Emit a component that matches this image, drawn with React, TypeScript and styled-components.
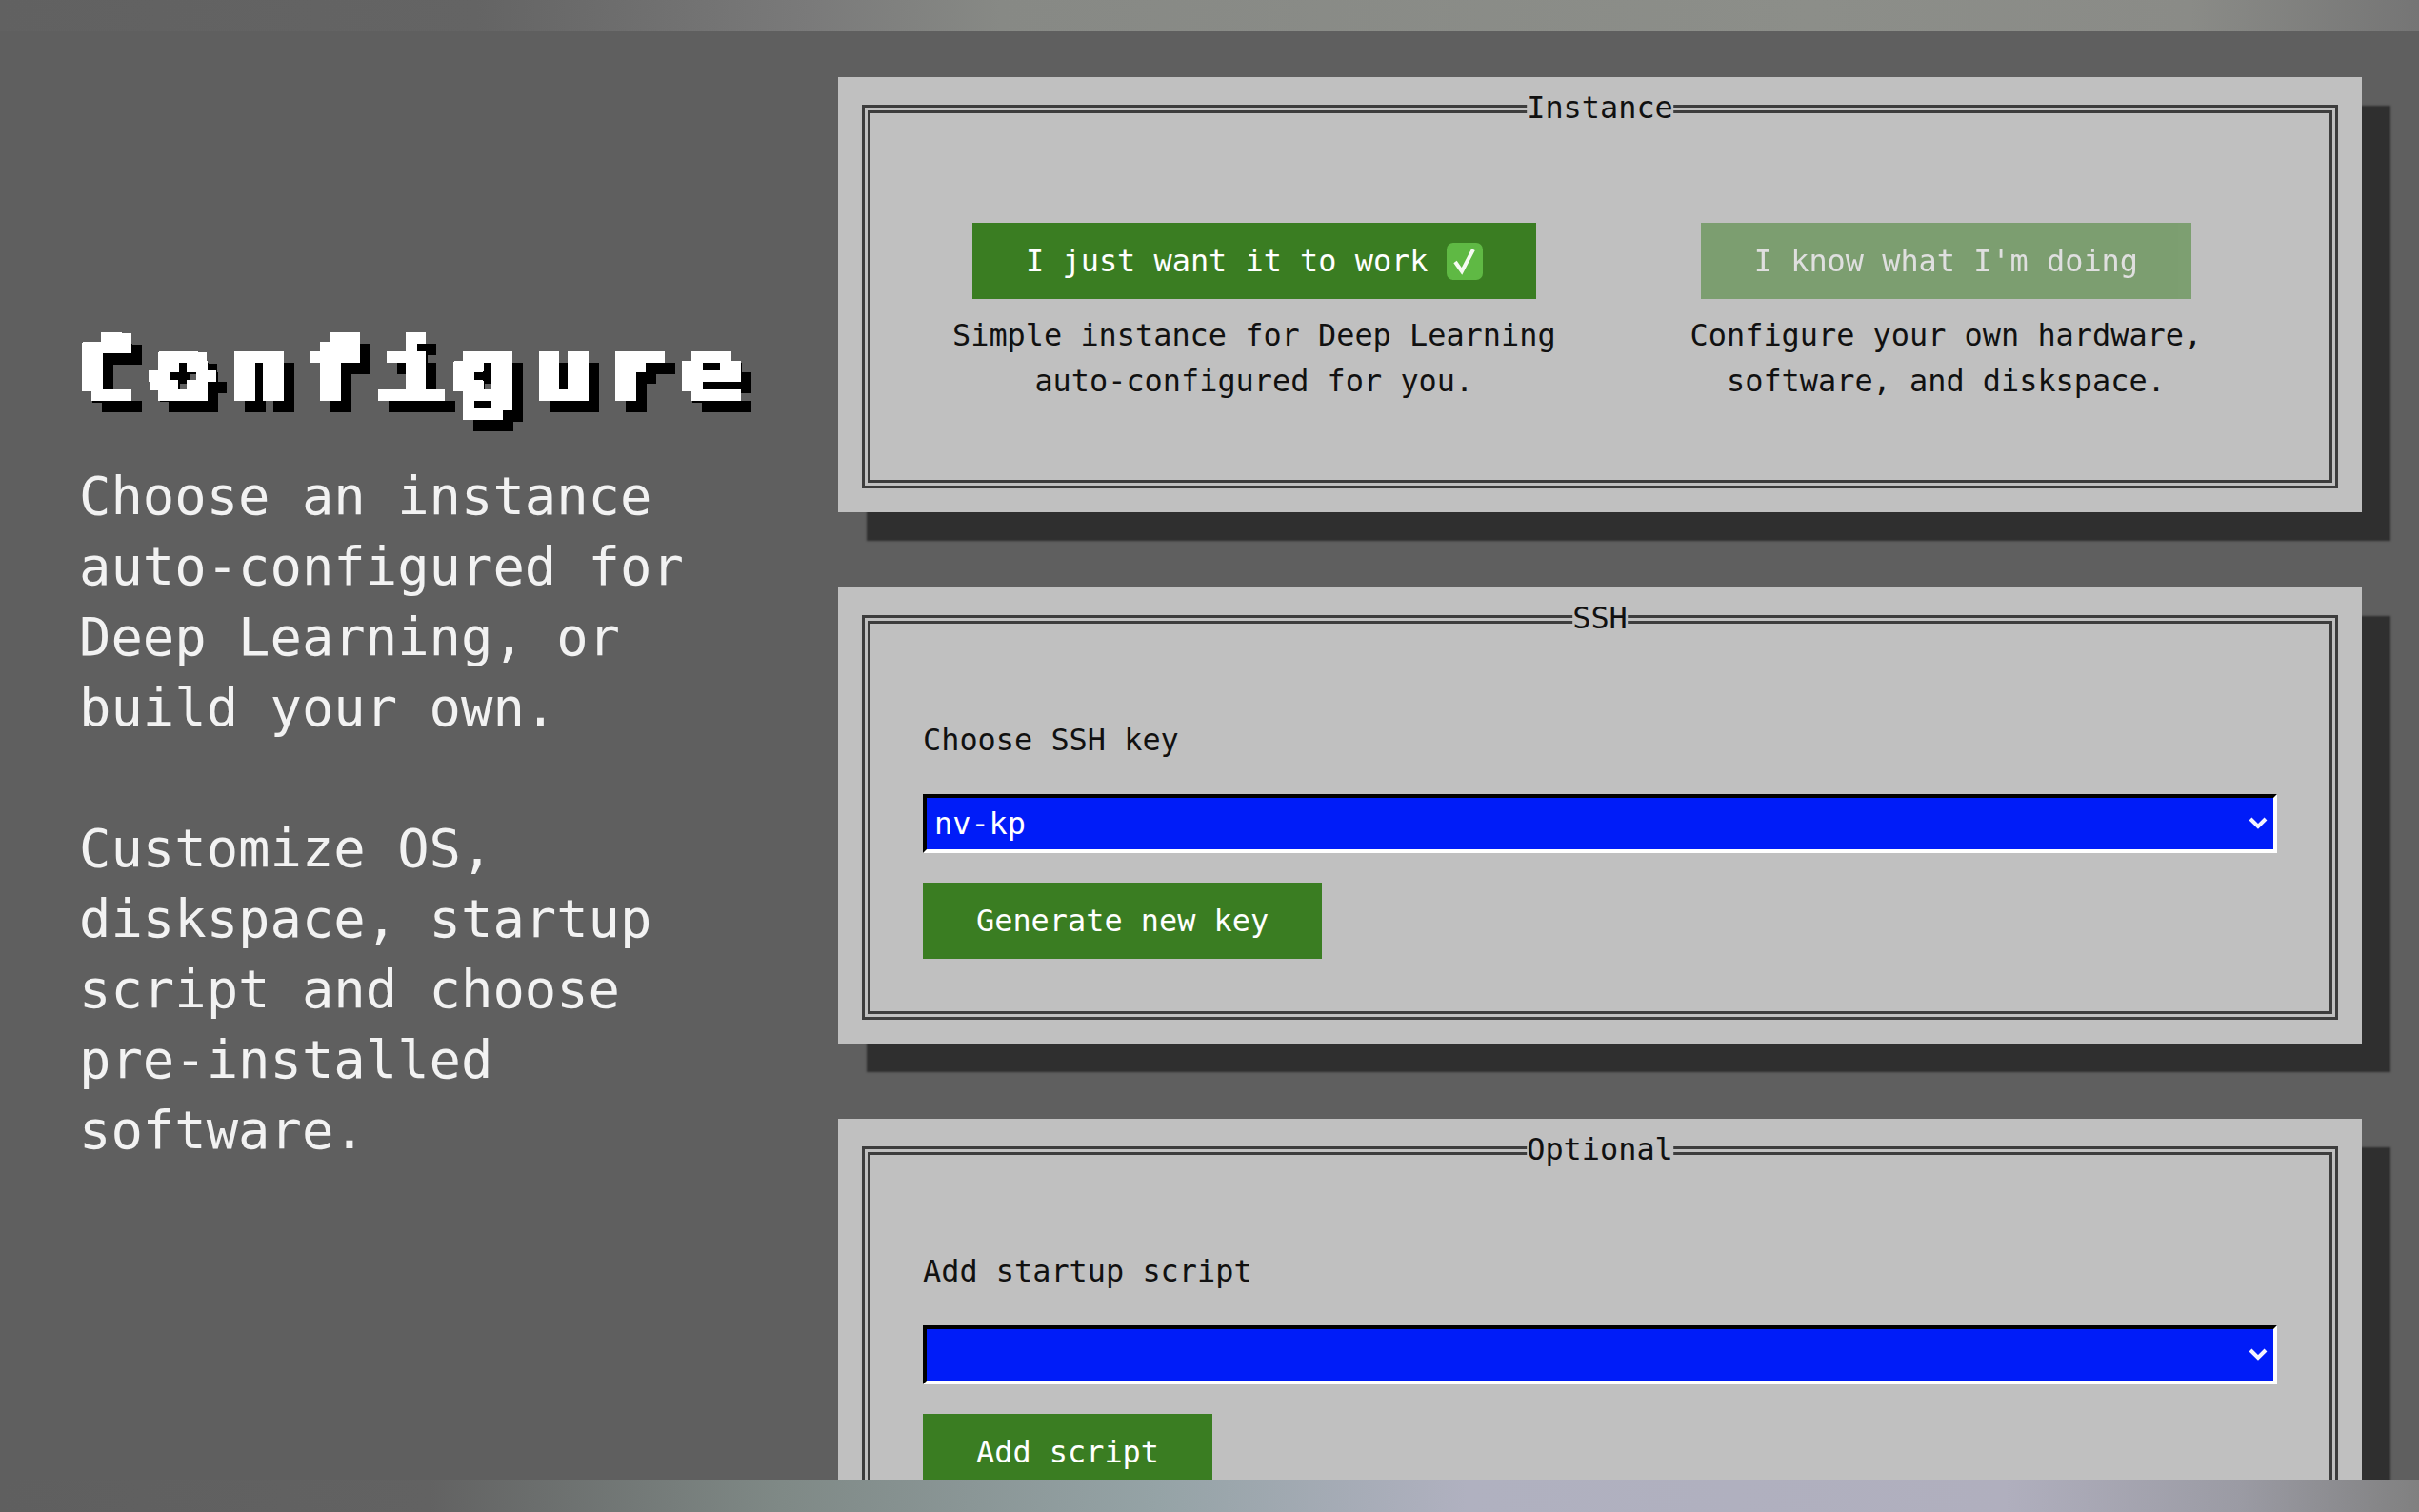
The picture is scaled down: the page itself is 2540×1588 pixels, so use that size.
import React from 'react';
import styled, { createGlobalStyle } from 'styled-components';

const GlobalStyle = createGlobalStyle`
	html,
	body {
		margin: 0;
		padding: 0;
		background: #5f5f5f;
	}
	* {
		box-sizing: border-box;
	}
`;

const Page = styled.div`
	display: grid;
	grid-template-rows: 33px 1fr 34px;
	width: 2540px;
	height: 1588px;
	overflow: hidden;
	background: #5f5f5f;
	font-family: 'DejaVu Sans Mono', 'Liberation Mono', monospace;
`;

const TopStrip = styled.div`
	background: linear-gradient(90deg, #616161 0, #646464 500px, #7a7a7a 850px, #878985 1050px, #8c8e89 1900px, #8a8b87 2300px, #757575 2540px);
`;

const BottomStrip = styled.div`
	z-index: 1;
	background: linear-gradient(90deg, #5f5f5f 0, #626262 450px, #7f8986 820px, #95a3a6 1215px, #b0b1c0 1540px, #b0afbe 2106px, #9b9ba4 2350px, #808080 2540px);
`;

const Main = styled.main`
	display: flex;
	min-height: 0;
	overflow: hidden;
	padding: 48px 0 0 83px;
`;

const Intro = styled.section`
	flex: 0 0 797px;
	padding-top: 259px;
	color: #f2f2f2;
`;

const Title = styled.h1`
	height: 144px;
	margin: 0 0 0 -6px;
	color: #fff;
	font-size: 87px;
	font-weight: 700;
	line-height: 100px;
	filter: url(#pixelate) drop-shadow(11px 12px 0 #000);
`;

const TitleText = styled.span`
	display: inline-block;
	-webkit-text-stroke: 1.5px #fff;
	letter-spacing: 8px;
	transform: scaleX(1.32);
	transform-origin: left center;
`;

const IntroText = styled.p`
	max-width: 720px;
	margin: 0 0 74px;
	font-size: 55.5px;
	line-height: 74px;
`;

const Panels = styled.div`
	display: flex;
	flex: 0 0 1600px;
	flex-direction: column;
	gap: 79px;
`;

const Panel = styled.section`
	flex-shrink: 0;
	padding: 29px 25px 25px;
	background: #c0c0c0;
	box-shadow: 30px 30px 2px #2f2f2f;
	color: #111;
	font-size: 31.9px;
	line-height: 48px;
`;

const Frame = styled.div<{ $top: number; $bottom: number }>`
	position: relative;
	padding: ${(p) => p.$top}px 55px ${(p) => p.$bottom}px;
	border: 9px double #3d3d3d;
`;

const Legend = styled.span`
	position: absolute;
	top: -30px;
	left: 50%;
	background: #c0c0c0;
	transform: translateX(-50%);
`;

const Choices = styled.div`
	display: flex;
	gap: 141px;
	padding-left: 31px;
`;

const Choice = styled.div`
	display: flex;
	flex-direction: column;
	align-items: center;
	gap: 14px;
	text-align: center;
`;

const Button = styled.button<{ $faded?: boolean }>`
	display: inline-flex;
	align-items: center;
	height: 80px;
	padding: 0 56px;
	border: 0;
	background: #3a7d22;
	color: #fff;
	font: inherit;
	opacity: ${(p) => (p.$faded ? 0.5 : 1)};
`;

const Description = styled.p`
	margin: 0;
	white-space: pre;
`;

const CheckIcon = styled.svg`
	margin-left: 19px;
`;

const Field = styled.label`
	display: block;
	margin-bottom: 34px;
	padding-top: 1px;
	height: 48px;
`;

const SelectBox = styled.div`
	position: relative;
	margin-bottom: 31px;
`;

const Select = styled.select`
	display: block;
	width: 100%;
	height: 62px;
	padding: 0 8px;
	border: 4px solid;
	border-color: #000 #fff #fff #000;
	border-radius: 0;
	background: #001cf8;
	color: #fff;
	font: inherit;
	appearance: none;
`;

const Chevron = styled.svg`
	position: absolute;
	top: 23px;
	right: 9px;
	pointer-events: none;
`;

const SelectField = ({ value }: { value: string }) => (
	<SelectBox>
		<Select defaultValue={value}>
			<option value={value}>{value}</option>
		</Select>
		<Chevron width="22" height="16" viewBox="0 0 22 16">
			<path d="M3 3l8 8 8-8" fill="none" stroke="#f4f4ff" strokeWidth="4" />
		</Chevron>
	</SelectBox>
);

const App = () => {
	return (
		<Page>
			<GlobalStyle />
			<TopStrip>
				<svg width="0" height="0" style={{ display: 'block' }}>
					<filter id="pixelate" x="-2%" y="-2%" width="104%" height="104%">
						<feFlood x="4" y="4" width="2" height="2" />
						<feComposite width="10" height="10" />
						<feTile result="grid" />
						<feComposite in="SourceGraphic" in2="grid" operator="in" />
						<feMorphology operator="dilate" radius="5" />
						<feComponentTransfer>
							<feFuncA type="discrete" tableValues="0 1 1 1" />
						</feComponentTransfer>
					</filter>
				</svg>
			</TopStrip>
			<Main>
				<Intro>
					<Title>
						<TitleText>Configure</TitleText>
					</Title>
					<IntroText>Choose an instance auto-configured for Deep Learning, or build your own.</IntroText>
					<IntroText>Customize OS, diskspace, startup script and choose pre-installed software.</IntroText>
				</Intro>
				<Panels>
					<Panel>
						<Frame $top={115} $bottom={80}>
							<Legend>Instance</Legend>
							<Choices>
								<Choice>
									<Button>
										I just want it to work
										<CheckIcon width="38" height="39" viewBox="0 0 38 39">
											<rect width="38" height="39" rx="7" fill="#5fb944" />
											<path d="M9 20l7 10L28 7" fill="none" stroke="#f6fbf3" strokeWidth="4" />
										</CheckIcon>
									</Button>
									<Description>{'Simple instance for Deep Learning\nauto-configured for you.'}</Description>
								</Choice>
								<Choice>
									<Button $faded>I know what I'm doing</Button>
									<Description>{'Configure your own hardware,\nsoftware, and diskspace.'}</Description>
								</Choice>
							</Choices>
						</Frame>
					</Panel>
					<Panel>
						<Frame $top={97} $bottom={55}>
							<Legend>SSH</Legend>
							<Field>Choose SSH key</Field>
							<SelectField value="nv-kp" />
							<Button>Generate new key</Button>
						</Frame>
					</Panel>
					<Panel>
						<Frame $top={97} $bottom={55}>
							<Legend>Optional</Legend>
							<Field>Add startup script</Field>
							<SelectField value="" />
							<Button>Add script</Button>
						</Frame>
					</Panel>
				</Panels>
			</Main>
			<BottomStrip />
		</Page>
	);
};

export default App;
